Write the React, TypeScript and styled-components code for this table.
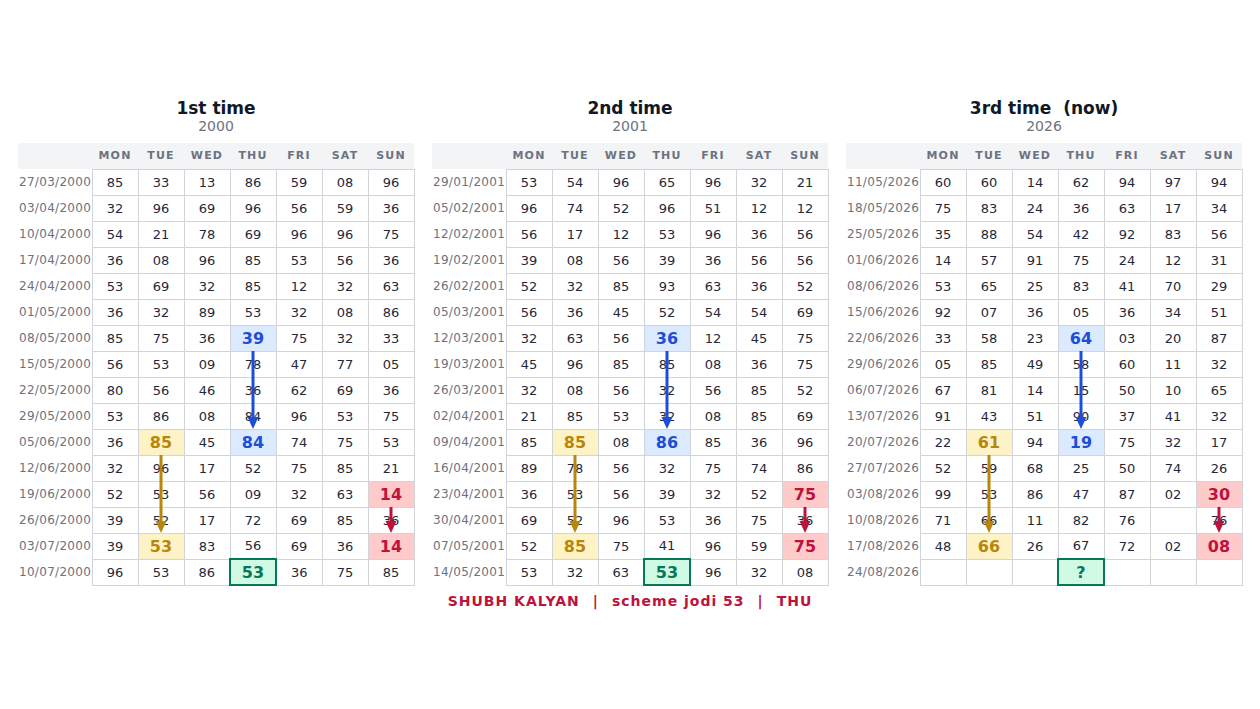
import React from 'react';
import styled, { createGlobalStyle } from 'styled-components';

type Mark = 'blue' | 'gold' | 'red' | 'green';

const GlobalStyle = createGlobalStyle`
  html, body {
    margin: 0;
    background: #ffffff;
    font-family: "DejaVu Sans", "Noto Sans", sans-serif;
    color: #1f2937;
  }
`;

const DAYS = ['MON', 'TUE', 'WED', 'THU', 'FRI', 'SAT', 'SUN'];

const palette: Record<Mark, { bg: string; fg: string }> = {
  blue: { bg: '#dbeafe', fg: '#1d4ed8' },
  gold: { bg: '#fef3c7', fg: '#b8860b' },
  red: { bg: '#fecaca', fg: '#be123c' },
  green: { bg: '#d1fae5', fg: '#047857' },
};

// same pattern positions in every period: [row, col, mark]
const MARKS: [number, number, Mark][] = [
  [6, 3, 'blue'],
  [10, 3, 'blue'],
  [10, 1, 'gold'],
  [14, 1, 'gold'],
  [12, 6, 'red'],
  [14, 6, 'red'],
  [15, 3, 'green'],
];

const ARROWS: { col: number; from: number; to: number; mark: Mark }[] = [
  { col: 3, from: 6, to: 10, mark: 'blue' },
  { col: 1, from: 10, to: 14, mark: 'gold' },
  { col: 6, from: 12, to: 14, mark: 'red' },
];

interface Period {
  title: string;
  year: string;
  rows: string[];
}

const periods: Period[] = [
  {
    title: '1st time',
    year: '2000',
    rows: [
      '27/03/2000 85 33 13 86 59 08 96',
      '03/04/2000 32 96 69 96 56 59 36',
      '10/04/2000 54 21 78 69 96 96 75',
      '17/04/2000 36 08 96 85 53 56 36',
      '24/04/2000 53 69 32 85 12 32 63',
      '01/05/2000 36 32 89 53 32 08 86',
      '08/05/2000 85 75 36 39 75 32 33',
      '15/05/2000 56 53 09 78 47 77 05',
      '22/05/2000 80 56 46 36 62 69 36',
      '29/05/2000 53 86 08 84 96 53 75',
      '05/06/2000 36 85 45 84 74 75 53',
      '12/06/2000 32 96 17 52 75 85 21',
      '19/06/2000 52 53 56 09 32 63 14',
      '26/06/2000 39 52 17 72 69 85 36',
      '03/07/2000 39 53 83 56 69 36 14',
      '10/07/2000 96 53 86 53 36 75 85',
    ],
  },
  {
    title: '2nd time',
    year: '2001',
    rows: [
      '29/01/2001 53 54 96 65 96 32 21',
      '05/02/2001 96 74 52 96 51 12 12',
      '12/02/2001 56 17 12 53 96 36 56',
      '19/02/2001 39 08 56 39 36 56 56',
      '26/02/2001 52 32 85 93 63 36 52',
      '05/03/2001 56 36 45 52 54 54 69',
      '12/03/2001 32 63 56 36 12 45 75',
      '19/03/2001 45 96 85 85 08 36 75',
      '26/03/2001 32 08 56 32 56 85 52',
      '02/04/2001 21 85 53 32 08 85 69',
      '09/04/2001 85 85 08 86 85 36 96',
      '16/04/2001 89 78 56 32 75 74 86',
      '23/04/2001 36 53 56 39 32 52 75',
      '30/04/2001 69 52 96 53 36 75 36',
      '07/05/2001 52 85 75 41 96 59 75',
      '14/05/2001 53 32 63 53 96 32 08',
    ],
  },
  {
    title: '3rd time\u00a0 (now)',
    year: '2026',
    rows: [
      '11/05/2026 60 60 14 62 94 97 94',
      '18/05/2026 75 83 24 36 63 17 34',
      '25/05/2026 35 88 54 42 92 83 56',
      '01/06/2026 14 57 91 75 24 12 31',
      '08/06/2026 53 65 25 83 41 70 29',
      '15/06/2026 92 07 36 05 36 34 51',
      '22/06/2026 33 58 23 64 03 20 87',
      '29/06/2026 05 85 49 58 60 11 32',
      '06/07/2026 67 81 14 15 50 10 65',
      '13/07/2026 91 43 51 90 37 41 32',
      '20/07/2026 22 61 94 19 75 32 17',
      '27/07/2026 52 59 68 25 50 74 26',
      '03/08/2026 99 53 86 47 87 02 30',
      '10/08/2026 71 66 11 82 76 - 76',
      '17/08/2026 48 66 26 67 72 02 08',
      '24/08/2026 - - - ? - - -',
    ],
  },
];

const DATE_W = 74;
const CELL_W = 46;
const ROW_H = 26;

const Page = styled.div`
  padding: 99px 18px 0;
  display: flex;
  flex-direction: column;
  align-items: center;
`;

const Boards = styled.div`
  display: flex;
  gap: 18px;
`;

const Board = styled.section`
  width: ${DATE_W + CELL_W * 7}px;
  display: flex;
  flex-direction: column;
`;

const Title = styled.div`
  text-align: center;
  font-weight: 700;
  font-size: 17px;
  line-height: 18px;
  color: #111827;
  white-space: pre;
  margin-bottom: 2px;
`;

const Year = styled.div`
  text-align: center;
  font-size: 14px;
  line-height: 14px;
  color: #6b7280;
  margin-bottom: 10px;
`;

const TableWrap = styled.div`
  position: relative;
`;

const Grid = styled.table`
  border-collapse: collapse;
  table-layout: fixed;
  width: 100%;

  tr {
    height: ${ROW_H}px;
  }
`;

const HeadCell = styled.th<{ $w: number }>`
  width: ${(p) => p.$w}px;
  padding: 0;
  background: #f3f4f6;
  color: #6b7280;
  font-size: 11px;
  font-weight: 700;
  letter-spacing: 1.2px;
  text-align: center;
  vertical-align: middle;
`;

const DateCell = styled.td`
  padding: 0 0 0 1px;
  font-size: 12px;
  letter-spacing: 0.3px;
  color: #6b7280;
  text-align: left;
  white-space: nowrap;
  vertical-align: middle;
`;

const Cell = styled.td<{ $mark?: Mark }>`
  padding: 0;
  text-align: center;
  vertical-align: middle;
  border: ${(p) => (p.$mark === 'green' ? `2px solid ${palette.green.fg}` : '1px solid #d1d5db')};
  background: ${(p) => (p.$mark ? palette[p.$mark].bg : '#ffffff')};
  color: ${(p) => (p.$mark ? palette[p.$mark].fg : '#1f2937')};
  font-size: ${(p) => (p.$mark ? '16px' : '13px')};
  font-weight: ${(p) => (p.$mark ? 700 : 400)};
`;

const Arrows = styled.svg`
  position: absolute;
  left: 0;
  top: 0;
  pointer-events: none;
  overflow: visible;
`;

const Footer = styled.div`
  margin-top: 7px;
  font-size: 14px;
  line-height: 17px;
  font-weight: 700;
  letter-spacing: 1px;
  color: #be123c;
  white-space: nowrap;
`;

const Sep = styled.span`
  padding: 0 13px;
`;

const markAt = (r: number, c: number): Mark | undefined =>
  MARKS.find(([mr, mc]) => mr === r && mc === c)?.[2];

const PeriodBoard = ({ period }: { period: Period }) => {
  const height = ROW_H * (period.rows.length + 1);
  const width = DATE_W + CELL_W * 7;
  return (
    <Board>
      <Title>{period.title}</Title>
      <Year>{period.year}</Year>
      <TableWrap>
        <Grid>
          <thead>
            <tr>
              <HeadCell $w={DATE_W} />
              {DAYS.map((d) => (
                <HeadCell key={d} $w={CELL_W}>
                  {d}
                </HeadCell>
              ))}
            </tr>
          </thead>
          <tbody>
            {period.rows.map((line, r) => {
              const [date, ...vals] = line.split(' ');
              return (
                <tr key={date}>
                  <DateCell>{date}</DateCell>
                  {vals.map((v, c) => (
                    <Cell key={c} $mark={markAt(r, c)}>
                      {v === '-' ? '' : v}
                    </Cell>
                  ))}
                </tr>
              );
            })}
          </tbody>
        </Grid>
        <Arrows width={width} height={height} viewBox={`0 0 ${width} ${height}`}>
          {ARROWS.map((a) => {
            const x = DATE_W + a.col * CELL_W + CELL_W / 2;
            const y1 = ROW_H * (a.from + 2);
            const y2 = ROW_H * (a.to + 1);
            const color = palette[a.mark].fg;
            return (
              <g key={a.mark}>
                <line x1={x} y1={y1} x2={x} y2={y2 - 10} stroke={color} strokeWidth={3} />
                <polygon points={`${x - 5.5},${y2 - 12} ${x + 5.5},${y2 - 12} ${x},${y2}`} fill={color} />
              </g>
            );
          })}
        </Arrows>
      </TableWrap>
    </Board>
  );
};

export default function App() {
  return (
    <>
      <GlobalStyle />
      <Page>
        <Boards>
          {periods.map((p) => (
            <PeriodBoard key={p.year} period={p} />
          ))}
        </Boards>
        <Footer>
          SHUBH KALYAN<Sep>|</Sep>scheme jodi 53<Sep>|</Sep>THU
        </Footer>
      </Page>
    </>
  );
}
